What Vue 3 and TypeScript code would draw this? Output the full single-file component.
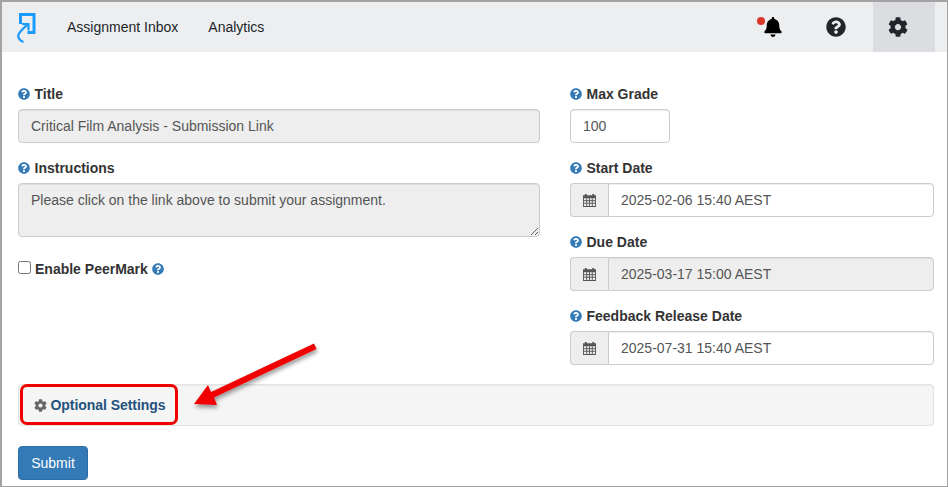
<script setup lang="ts">
const cog = "M487.4 315.7l-42.6-24.6c4.3-23.2 4.3-47 0-70.2l42.6-24.6c4.9-2.8 7.1-8.6 5.5-14-11.1-35.6-30-67.8-54.7-94.6-3.8-4.1-10-5.1-14.8-2.3L380.8 110c-17.9-15.4-38.5-27.3-60.8-35.1V25.8c0-5.6-3.9-10.5-9.4-11.7-36.7-8.2-74.3-7.8-109.2 0-5.5 1.2-9.4 6.1-9.4 11.7V75c-22.2 7.9-42.8 19.8-60.8 35.1L88.7 85.5c-4.9-2.8-11-1.9-14.8 2.3-24.7 26.7-43.6 58.9-54.7 94.6-1.7 5.4.6 11.2 5.5 14L67.3 221c-4.3 23.2-4.3 47 0 70.2l-42.6 24.6c-4.9 2.8-7.1 8.6-5.5 14 11.1 35.6 30 67.8 54.7 94.6 3.8 4.1 10 5.1 14.8 2.3l42.6-24.6c17.9 15.4 38.5 27.3 60.8 35.1v49.2c0 5.6 3.9 10.5 9.4 11.7 36.7 8.2 74.3 7.8 109.2 0 5.5-1.2 9.4-6.1 9.4-11.7v-49.2c22.2-7.9 42.8-19.8 60.8-35.1l42.6 24.6c4.9 2.8 11 1.9 14.8-2.3 24.7-26.7 43.6-58.9 54.7-94.6 1.5-5.5-.7-11.3-5.6-14.1zM256 336c-44.1 0-80-35.9-80-80s35.9-80 80-80 80 35.9 80 80-35.9 80-80 80z";
const help = "M504 256c0 136.997-111.043 248-248 248S8 392.997 8 256C8 119.083 119.043 8 256 8s248 111.083 248 248zM262.655 90c-54.497 0-89.255 22.957-116.549 63.758-3.536 5.286-2.353 12.415 2.715 16.258l34.699 26.31c5.205 3.947 12.621 3.008 16.665-2.122 17.864-22.658 30.113-35.797 57.303-35.797 20.429 0 45.698 13.148 45.698 32.958 0 14.976-12.363 22.667-32.534 33.976C247.128 238.528 216 254.941 216 296v4c0 6.627 5.373 12 12 12h56c6.627 0 12-5.373 12-12v-1.333c0-28.462 83.186-29.647 83.186-106.667 0-58.002-60.165-102-116.531-102zM256 338c-25.365 0-46 20.635-46 46 0 25.364 20.635 46 46 46s46-20.636 46-46c0-25.365-20.635-46-46-46z";
const bell = "M224 512c35.32 0 63.97-28.65 63.97-64H160.03c0 35.35 28.65 64 63.97 64zm215.39-149.71c-19.32-20.76-55.47-51.99-55.47-154.29 0-77.7-54.48-139.9-127.94-155.16V32c0-17.67-14.32-32-31.98-32s-31.98 14.33-31.98 32v20.84C118.56 68.1 64.08 130.3 64.08 208c0 102.3-36.15 133.53-55.47 154.29-6 6.45-8.66 14.16-8.61 21.71.11 16.4 12.98 32 32.1 32h383.8c19.12 0 32-15.6 32.1-32 .05-7.55-2.61-15.27-8.61-21.71z";

const dates = [
  { label: "Start Date", value: "2025-02-06 15:40 AEST", locked: false },
  { label: "Due Date", value: "2025-03-17 15:00 AEST", locked: true },
  { label: "Feedback Release Date", value: "2025-07-31 15:40 AEST", locked: false },
];
</script>

<template>
  <div class="page">
    <header class="nav">
      <svg class="logo" viewBox="0 0 20 30" width="20" height="30">
        <path d="M3.5 11V1.5H17V19.5H10.5" fill="none" stroke="#1a9bfc" stroke-width="3" />
        <path d="M6.5 29C3 27.5 0.5 25 1.5 21.5C2.5 18.5 6 15.5 10.5 11.5" fill="none" stroke="#1a9bfc" stroke-width="2.2" />
        <path d="M5 11H11.5V17.5" fill="none" stroke="#1a9bfc" stroke-width="2.2" />
      </svg>
      <a class="link first">Assignment Inbox</a>
      <a class="link">Analytics</a>
      <div class="tools">
        <div class="tool bell">
          <svg viewBox="0 0 448 512" width="18" height="20"><path :d="bell" fill="#000" /></svg>
          <span class="dot"></span>
        </div>
        <div class="tool help">
          <svg viewBox="0 0 512 512" width="20" height="20"><path :d="help" fill="#212529" /></svg>
        </div>
        <div class="tool cog">
          <svg viewBox="0 0 512 512" width="20" height="20"><path :d="cog" fill="#212529" /></svg>
        </div>
      </div>
    </header>

    <main class="main">
      <div class="columns">
        <div class="col">
          <div class="group">
            <label class="label"><svg class="q" viewBox="0 0 512 512"><path :d="help" /></svg>Title</label>
            <input class="control locked" readonly value="Critical Film Analysis - Submission Link" />
          </div>
          <div class="group">
            <label class="label"><svg class="q" viewBox="0 0 512 512"><path :d="help" /></svg>Instructions</label>
            <textarea class="control locked area" readonly>Please click on the link above to submit your assignment.</textarea>
          </div>
          <label class="check">
            <input type="checkbox" />
            <span>Enable PeerMark</span>
            <svg class="q after" viewBox="0 0 512 512"><path :d="help" /></svg>
          </label>
        </div>

        <div class="col">
          <div class="group">
            <label class="label"><svg class="q" viewBox="0 0 512 512"><path :d="help" /></svg>Max Grade</label>
            <input class="control grade" readonly value="100" />
          </div>
          <div v-for="d in dates" :key="d.label" class="group">
            <label class="label"><svg class="q" viewBox="0 0 512 512"><path :d="help" /></svg>{{ d.label }}</label>
            <div class="date">
              <span class="addon">
                <svg viewBox="0 0 14 15" width="13" height="14">
                  <path d="M0 2.5H14V15H0Z M1 5.5V14H13V5.5Z" fill="#555" fill-rule="evenodd" />
                  <path d="M3 1V4M11 1V4" stroke="#555" stroke-width="2" />
                  <path d="M1 8.2H13M1 11H13M4 5.5V14M7 5.5V14M10 5.5V14" stroke="#555" stroke-width="1" />
                </svg>
              </span>
              <input class="control joined" :class="{ locked: d.locked }" readonly :value="d.value" />
            </div>
          </div>
        </div>
      </div>

      <section class="well">
        <svg class="gear" viewBox="0 0 512 512" width="13" height="13"><path :d="cog" fill="#666" /></svg>
        <a class="opt">Optional Settings</a>
      </section>

      <button class="submit" type="button">Submit</button>
    </main>

    <div class="callout"></div>
    <svg class="arrow" width="948" height="487" viewBox="0 0 948 487">
      <defs>
        <filter id="arrow-shadow" x="-20%" y="-20%" width="140%" height="150%">
          <feDropShadow dx="1" dy="3" stdDeviation="2" flood-color="#000" flood-opacity="0.4" />
        </filter>
      </defs>
      <path d="M314 343.5L316.5 349L214 397.5L217 405L194 404L208 385L211 392Z" fill="#f00000" filter="url(#arrow-shadow)" />
    </svg>
  </div>
</template>

<style>
html, body { margin: 0; padding: 0; background: #fff; }
</style>

<style scoped>
.page {
  position: relative;
  width: 948px;
  height: 487px;
  box-sizing: border-box;
  border: 1px solid #a3a3a3;
  border-top-width: 2px;
  border-left-width: 2px;
  overflow: hidden;
  background: #fff;
  font-family: "Liberation Sans", Arial, sans-serif;
  font-size: 14px;
  line-height: 20px;
  color: #333;
}
.nav {
  display: flex;
  align-items: center;
  height: 50px;
  background: #edeef0;
  padding: 0 12px 0 15px;
}
.logo { flex: none; margin-top: 1px; }
.link { color: #212529; }
.first { margin-left: 30px; }
.link + .link { margin-left: 30px; }
.tools { margin-left: auto; display: flex; align-self: stretch; }
.tool {
  position: relative;
  display: flex;
  align-items: center;
  justify-content: center;
  height: 50px;
  width: 62px;
  box-sizing: border-box;
  padding-right: 12px;
}
.help { width: 63px; }
.cog { background: #dcdde0; }
.dot {
  position: absolute;
  left: 9px;
  top: 15px;
  width: 8px;
  height: 8px;
  border-radius: 50%;
  background: #d9372a;
}
.main { padding: 32px 13px 0 16px; }
.columns { display: grid; grid-template-columns: 522px 364px; column-gap: 30px; height: 300px; }
.group { margin-bottom: 15px; }
.label { display: flex; align-items: center; font-weight: 700; height: 20px; margin-bottom: 5px; }
.q { width: 12px; height: 12px; margin-right: 4.5px; fill: #337ab7; flex: none; }
.q.after { margin: 0 0 0 4px; }
.control {
  display: block;
  width: 100%;
  height: 34px;
  box-sizing: border-box;
  padding: 6px 12px;
  border: 1px solid #ccc;
  border-radius: 4px;
  background: #fff;
  color: #555;
  font: inherit;
  box-shadow: inset 0 1px 1px rgba(0, 0, 0, .075);
  outline: none;
}
.locked { background: #eee; }
.area { height: 54px; resize: vertical; }
.grade { width: 100px; }
.check { display: flex; align-items: center; font-weight: 700; margin-top: 22px; height: 20px; }
.check input { margin: -3px 4px 0 0; width: 13px; height: 13px; }
.date { display: flex; height: 34px; }
.addon {
  flex: none;
  width: 38px;
  box-sizing: border-box;
  display: flex;
  align-items: center;
  justify-content: center;
  background: #eee;
  border: 1px solid #ccc;
  border-right: 0;
  border-radius: 4px 0 0 4px;
}
.joined { flex: 1; width: auto; min-width: 0; border-radius: 0 4px 4px 0; }
.well {
  box-sizing: border-box;
  height: 42px;
  display: flex;
  align-items: center;
  padding-left: 15px;
  background: #f5f5f5;
  border: 1px solid #e3e3e3;
  border-radius: 4px;
  box-shadow: inset 0 1px 1px rgba(0, 0, 0, .05);
}
.gear { margin-right: 3.5px; }
.opt { font-weight: 700; color: #23527c; letter-spacing: -.05px; }
.submit {
  display: block;
  margin-top: 20px;
  width: 70px;
  height: 34px;
  padding: 0;
  font: inherit;
  color: #fff;
  background: #337ab7;
  border: 1px solid #2e6da4;
  border-radius: 4px;
}
.callout {
  position: absolute;
  left: 18px;
  top: 382px;
  width: 158px;
  height: 41px;
  box-sizing: border-box;
  border: 3px solid #f00000;
  border-radius: 7px;
}
.arrow { position: absolute; left: -2px; top: -2px; pointer-events: none; }
</style>
